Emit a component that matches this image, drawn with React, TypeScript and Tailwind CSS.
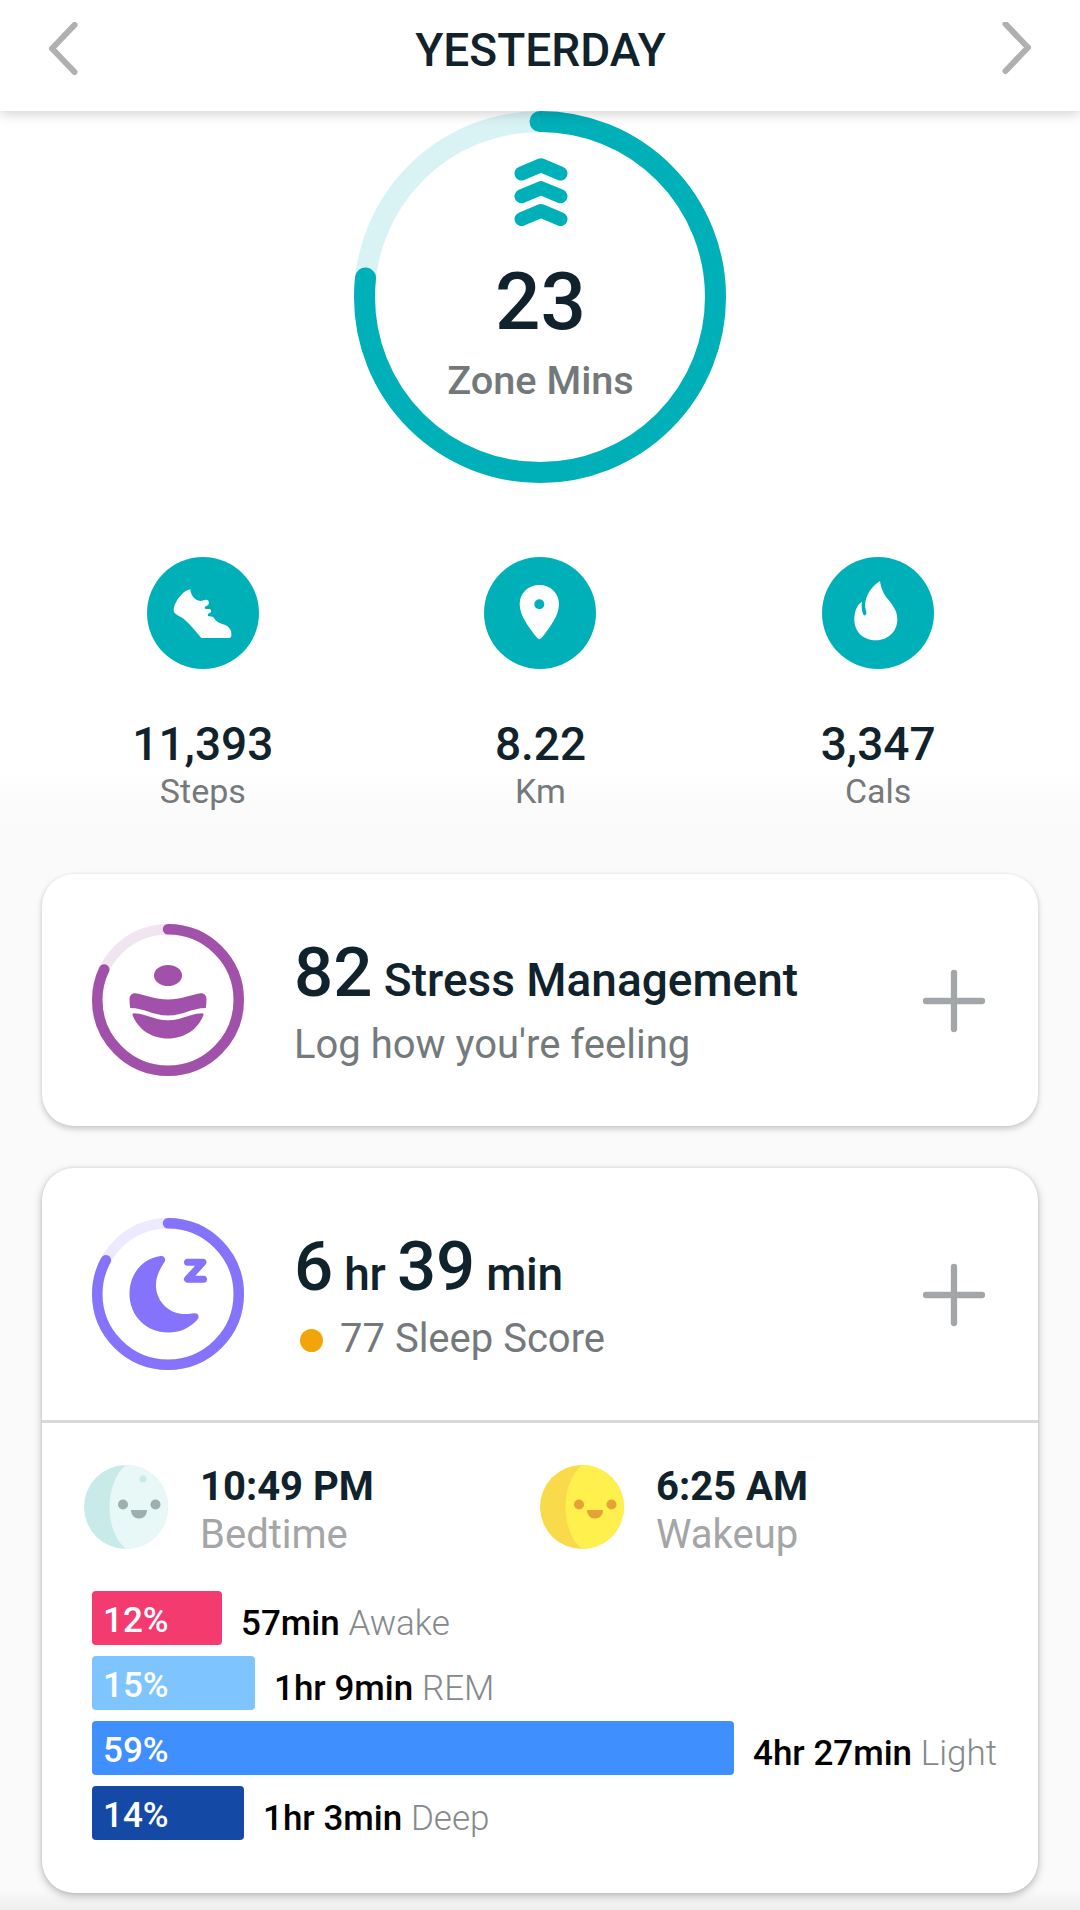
import type { ReactNode } from "react";

const stages = [
    { name: "Awake", time: "57min", percent: "12%", width: 130, color: "bg-[#f43b6f]" },
    { name: "REM", time: "1hr 9min", percent: "15%", width: 163, color: "bg-[#7ec4ff]" },
    { name: "Light", time: "4hr 27min", percent: "59%", width: 642, color: "bg-[#3f8fff]" },
    { name: "Deep", time: "1hr 3min", percent: "14%", width: 152, color: "bg-[#144aa5]" },
];

function Ring({ size, stroke, value, className }: { size: number; stroke: number; value: number; className: string }) {
    const r = (size - stroke) / 2;
    const length = 2 * Math.PI * r;
    return (
        <svg width={size} height={size} className={`absolute inset-0 -rotate-90 ${className}`} fill="none" stroke="currentColor" strokeWidth={stroke}>
            <circle cx={size / 2} cy={size / 2} r={r} opacity={0.15} />
            <circle cx={size / 2} cy={size / 2} r={r} strokeLinecap="round" strokeDasharray={`${length * value} ${length}`} />
        </svg>
    );
}

function Plus() {
    return (
        <svg width="64" height="64" viewBox="0 0 64 64" className="mt-px mr-[52px] ml-auto text-[#a2a6a9]" stroke="currentColor" strokeWidth="6.3" strokeLinecap="round">
            <path d="M4 32h56M32 4v56" />
        </svg>
    );
}

function Stat({ value, label, children }: { value: string; label: string; children: ReactNode }) {
    return (
        <div className="flex flex-col items-center">
            <div className="size-28 rounded-full bg-[#00b0b9]">
                <svg viewBox="0 0 336 336" className="size-28" fill="white">{children}</svg>
            </div>
            <div className="mt-[51px] text-[46px] leading-[48px] font-medium">{value}</div>
            <div className="mt-[3px] text-[34px] leading-10 text-[#75797c]">{label}</div>
        </div>
    );
}

function SummaryRow({ icon, title, subtitle }: { icon: ReactNode; title: ReactNode; subtitle: ReactNode }) {
    return (
        <div className="flex h-[252px] items-center pl-[50px]">
            <div className="relative size-[152px] shrink-0">{icon}</div>
            <div className="mt-[6px] ml-[50px]">
                <div className="h-[70px] text-[46px] leading-[70px] font-medium whitespace-nowrap">{title}</div>
                <div className="mt-[13px] flex items-center text-[40px] leading-[48px] text-[#74797c]">{subtitle}</div>
            </div>
            <Plus />
        </div>
    );
}

function Big({ children }: { children: ReactNode }) {
    return <span className="text-[69px] leading-[70px]">{children}</span>;
}

export default function App() {
    return (
        <div className="h-[1910px] w-[1080px] overflow-hidden bg-[linear-gradient(#fafafa_1890px,#eeeeee_1910px)] font-['Roboto','Liberation_Sans',sans-serif] text-[#10222b]">
            <header className="relative z-10 flex h-[111px] items-center justify-between bg-white px-[48px] pb-[12px] shadow-[0_3px_12px_rgba(0,0,0,0.18)]">
                <svg width="31" height="56" viewBox="0 0 31 56" fill="none" stroke="#b0b0b0" strokeWidth="6" strokeLinecap="round" strokeLinejoin="round">
                    <path d="M26.500 3 4 26.500 26.500 50" />
                </svg>
                <h1 className="mt-px ml-px text-[46px] leading-[54px] font-medium">YESTERDAY</h1>
                <svg width="31" height="56" viewBox="0 0 31 56" fill="none" stroke="#b0b0b0" strokeWidth="6" strokeLinecap="round" strokeLinejoin="round">
                    <path d="M4.500 2 27 25.500 4.500 49" />
                </svg>
            </header>

            <section className="h-[763px] bg-[linear-gradient(#fff_660px,#fafafa_710px)]">
                <div className="relative mx-auto flex size-[372px] flex-col items-center">
                    <Ring size={372} stroke={21} value={0.767} className="text-[#00b0b9]" />
                    <svg width="54" height="70" viewBox="0 0 54 70" className="mt-[46px] ml-[2px]" fill="none" stroke="#00b0b9" strokeWidth="14" strokeLinecap="round" strokeLinejoin="round">
                        <path d="M7.500 16.500 27 8.300l19.500 8.200M7.500 39.300 27 31.100l19.500 8.200M7.500 62.100 27 53.900l19.500 8.200" />
                    </svg>
                    <div className="mt-[35px] ml-px text-[80px] leading-[80px] font-medium">23</div>
                    <div className="mt-[19px] ml-px text-[39.7px] leading-10 font-medium text-[#73787b]">Zone Mins</div>
                </div>

                <div className="mt-[74px] grid grid-cols-3 pr-[33px] pl-[34px]">
                    <Stat value="11,393" label="Steps">
                        <path d="M130 97C131 115 143 130 160 132C170 132 173 127 180 129C187 131 188 140 182 145L174 149C172 153 174 156 179 156L188 156C194 158 194 166 188 168L183 171C181 176 183 178 188 178L199 180C204 191 214 197 228 202C247 208 255 220 253 236C252 241 249 243 244 243L163 243C145 223 126 196 103 181C91 174 81 169 80 162C79 145 91 126 103 113C110 105 120 99 130 97Z" />
                    </Stat>
                    <Stat value="8.22" label="Km">
                        <path fillRule="evenodd" d="M166 84C199 84 225 108 225 141C225 176 198 210 175 240Q166 253 157 240C134 210 107 176 107 141C107 108 133 84 166 84ZM166 127A15 15 0 1 0 166 157A15 15 0 1 0 166 127Z" />
                    </Stat>
                    <Stat value="3,347" label="Cals">
                        <path d="M174 72C150 87 131 113 129 144C129 155 134 163 133 171C130 177 125 176 123 171C118 158 119 145 119 134C105 144 97 163 97 187C97 226 125 250 162 250C199 250 226 223 226 187C226 162 213 146 200 129C184 110 177 94 174 72Z" />
                    </Stat>
                </div>
            </section>

            <main className="flex flex-col gap-[42px] px-[42px]">
                <section className="rounded-[32px] bg-white shadow-[0_3px_6px_rgba(0,0,0,0.2),0_0_3px_rgba(0,0,0,0.06)]">
                    <SummaryRow
                        icon={
                            <>
                                <Ring size={152} stroke={10.5} value={0.82} className="text-[#a251aa]" />
                                <svg viewBox="0 0 152 152" className="absolute inset-0" fill="#a251aa">
                                    <ellipse cx="76" cy="51.500" rx="14" ry="10.500" />
                                    <path d="M43.500 69.300C54 71 63 75.500 76 75.500C89 75.500 98 71 108.500 69.300C112 69 114.500 71.500 114.500 75Q114.500 79.500 113.800 84C100 84 91 91.500 76 91.500C61 91.500 52 84 38.200 84Q37.500 79.500 37.500 75C37.500 71.500 40 69 43.500 69.300Z" />
                                    <path d="M42 89.300C54 89.500 63 96.300 76 96.300C89 96.300 98 89.500 110 89.300Q112.200 89.300 111.300 91.500C106 105 93 114.500 76 114.500C59 114.500 46 105 40.700 91.500Q39.800 89.300 42 89.300Z" />
                                </svg>
                            </>
                        }
                        title={<><Big>82</Big> Stress Management</>}
                        subtitle="Log how you're feeling"
                    />
                </section>

                <section className="h-[725px] rounded-[32px] bg-white shadow-[0_3px_8px_rgba(0,0,0,0.26),0_0_3px_rgba(0,0,0,0.1)]">
                    <SummaryRow
                        icon={
                            <>
                                <Ring size={152} stroke={10.5} value={0.828} className="text-[#8573fc]" />
                                <svg viewBox="0 0 152 152" className="absolute inset-0" fill="#8573fc">
                                    <path d="M67.500 38.200C71.500 37 74.500 40 72.500 44C67 52 63.500 60 64 69C65 85 79 97.500 96 96L102 95.300C106 95 108 98 105.500 101.500C98 110 88 114.500 76 114.500C54 114.500 37.500 97.500 37.500 76C37.500 56 50 41 67.500 38.200Z" />
                                    <path d="M95.500 44.200h15.500L95.500 61.200h16" fill="none" stroke="#8573fc" strokeWidth="7" strokeLinecap="round" strokeLinejoin="round" />
                                </svg>
                            </>
                        }
                        title={<div className="-tracking-[0.2px]"><Big>6</Big> hr <Big>39</Big> min</div>}
                        subtitle={<><span className="mt-[3px] mr-[17px] ml-[6px] size-[23px] rounded-full bg-[#f2a50a]" />77 Sleep Score</>}
                    />
                    <div className="border-t-[3px] border-[#d9d9d9] pt-[40px]">
                        <div className="grid grid-cols-[456px_1fr] pl-[42px]">
                            <div className="flex">
                                <svg viewBox="0 0 84 84" className="mt-[2px] mr-[32px] size-[84px]">
                                    <circle cx="42" cy="42" r="42" fill="#c8ebea" />
                                    <path d="M42 0a42 42 0 0 1 0 84C20 66 20 18 42 0Z" fill="#e7f8f7" />
                                    <circle cx="59" cy="14" r="3.500" fill="#c8ebea" />
                                    <circle cx="39" cy="39.500" r="5" fill="#9bb0af" />
                                    <circle cx="71.500" cy="39.500" r="5" fill="#9bb0af" />
                                    <path d="M47 45h16c0 5-3.500 8.500-8 8.500S47 50 47 45Z" fill="#9bb0af" />
                                </svg>
                                <div className="text-[40px] leading-[48px]">
                                    <div className="font-bold">10:49 PM</div>
                                    <div className="text-[#a3a5a6]">Bedtime</div>
                                </div>
                            </div>
                            <div className="flex">
                                <svg viewBox="0 0 84 84" className="mt-[2px] mr-[32px] size-[84px]">
                                    <circle cx="42" cy="42" r="42" fill="#f8da4a" />
                                    <path d="M42 0a42 42 0 0 1 0 84C20 66 20 18 42 0Z" fill="#fff04d" />
                                    <circle cx="39" cy="39.500" r="5" fill="#e3a336" />
                                    <circle cx="71.500" cy="39.500" r="5" fill="#e3a336" />
                                    <path d="M47 45h16c0 5-3.500 8.500-8 8.500S47 50 47 45Z" fill="#e3a336" />
                                </svg>
                                <div className="text-[40px] leading-[48px]">
                                    <div className="font-bold">6:25 AM</div>
                                    <div className="text-[#a3a5a6]">Wakeup</div>
                                </div>
                            </div>
                        </div>

                        <div className="mt-[32px] flex flex-col gap-[11px] pl-[50px]">
                            {stages.map((stage) => (
                                <div key={stage.name} className="flex h-[54px] items-center text-[35px] leading-[54px] whitespace-nowrap">
                                    <div className={`h-[54px] shrink-0 rounded-[4px] pl-[11px] font-medium text-white ${stage.color}`} style={{ width: stage.width }}>
                                        <div className="mt-[3px]">{stage.percent}</div>
                                    </div>
                                    <div className="mt-[11px] ml-[19px] font-medium text-black">
                                        {stage.time} <span className="font-light text-[#85898b]">{stage.name}</span>
                                    </div>
                                </div>
                            ))}
                        </div>
                    </div>
                </section>
            </main>
        </div>
    );
}
